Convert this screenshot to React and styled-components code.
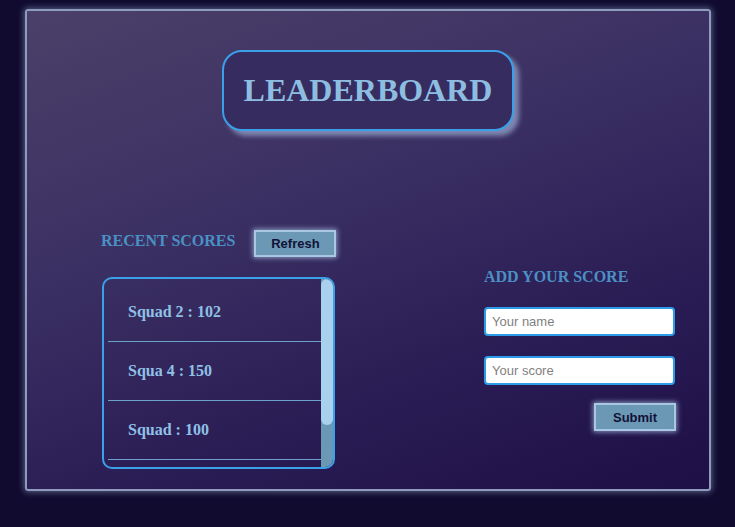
import React from 'react';
import styled, {createGlobalStyle} from 'styled-components';

//-------------------------------STYLED COMPONENTS-------------------------------//

const GlobalStyle = createGlobalStyle`
  html, body {
    margin: 0;
    padding: 0;
    background: #110b30;
    height: 100%;
  }
  #root {
    min-height: 100%;
  }
`

const Page = styled.div`
  width: 735px;
  height: 527px;
  padding: 9px 0 0 25px;
  box-sizing: border-box;
  background: #110b30;
`

const Board = styled.div`
  width: 686px;
  height: 482px;
  box-sizing: border-box;
  border: 2px solid #8d9cbc;
  border-radius: 3px;
  box-shadow: 0 0 6px 1px rgba(140, 156, 196, 0.6);
  background: linear-gradient(160deg, #4b4069 0%, #3a2f62 40%, #2a1d55 70%, #1e0f46 100%);
  padding-top: 39px;
  display: flex;
  flex-direction: column;
`

const TitleBox = styled.div`
  align-self: center;
  width: 292px;
  height: 81px;
  box-sizing: border-box;
  border: 2px solid #3aa0e8;
  border-radius: 20px;
  background: #362c5f;
  box-shadow: 5px 5px 5px rgba(150, 165, 205, 0.75);
  display: flex;
  align-items: center;
  justify-content: center;
`

const Title = styled.h1`
  margin: 0;
  font-family: "Liberation Serif", serif;
  font-weight: bold;
  font-size: 32px;
  color: #8dbde0;
`

const Columns = styled.div`
  display: flex;
  margin-top: 99px;
  padding-left: 74px;
`

const LeftColumn = styled.div`
  display: flex;
  flex-direction: column;
  width: 235px;
  flex-shrink: 0;
`

const HeadRow = styled.div`
  display: flex;
  align-items: center;
  gap: 19px;
`

const Heading = styled.h2`
  margin: 0;
  white-space: nowrap;
  flex-shrink: 0;
  font-family: "Liberation Serif", serif;
  font-weight: bold;
  font-size: 16px;
  line-height: 18px;
  color: #4a90c4;
  ${props => props.offset && 'margin-top: -5px;'}
`

const GlowButton = styled.button`
  width: 82px;
  height: ${props => props.tall ? '28px' : '27px'};
  flex-shrink: 0;
  box-sizing: border-box;
  border: 2px solid #a9c6e2;
  background: #6a98b5;
  box-shadow: 0 0 5px 1px rgba(170, 195, 230, 0.75);
  font-family: "Liberation Sans", Arial, sans-serif;
  font-weight: bold;
  font-size: 13px;
  color: #121236;
  padding: 0;
  cursor: pointer;
`

const ListFrame = styled.div`
  margin: 20px 0 0 1px;
  width: 233px;
  height: 192px;
  box-sizing: border-box;
  border: 2px solid #3aa0e8;
  border-radius: 10px;
  overflow: hidden;
  display: flex;
`

const ScoreList = styled.ul`
  list-style: none;
  margin: 0;
  flex: 1;
  padding: 4px 0 0 4px;
  overflow: hidden;
`

const ScoreItem = styled.li`
  height: 59px;
  box-sizing: border-box;
  border-bottom: 1px solid #6ba2cc;
  padding-left: 20px;
  display: flex;
  align-items: center;
  font-family: "Liberation Serif", serif;
  font-weight: bold;
  font-size: 16px;
  color: #90c0e6;
`

const ScrollTrack = styled.div`
  width: 12px;
  flex-shrink: 0;
  background: #6a98b5;
`

const ScrollThumb = styled.div`
  width: 12px;
  height: 146px;
  border-radius: 6px;
  background: #a9d1ee;
`

const RightColumn = styled.form`
  display: flex;
  flex-direction: column;
  margin-left: 148px;
  margin-top: 38px;
  width: 192px;
`

const InputField = styled.input`
  width: 191px;
  height: 29px;
  box-sizing: border-box;
  border: 2px solid #2c9be8;
  border-radius: 4px;
  background: #fff;
  margin-top: ${props => props.first ? '21px' : '20px'};
  padding: 0 6px;
  font-family: "Liberation Sans", Arial, sans-serif;
  font-size: 13px;
  color: #333;
  outline: none;

  &::placeholder {
    color: #7f7f7f;
  }
`

const SubmitRow = styled.div`
  display: flex;
  justify-content: flex-end;
  margin-top: 18px;
`

const scores = [
  {id: 1, name: 'Squad 2', score: 102},
  {id: 2, name: 'Squa 4', score: 150},
  {id: 3, name: 'Squad', score: 100}
];

export default function App () {
  return (
    <Page>
      <GlobalStyle/>
      <Board>
        <TitleBox>
          <Title>LEADERBOARD</Title>
        </TitleBox>
        <Columns>
          <LeftColumn>
            <HeadRow>
              <Heading offset>RECENT SCORES</Heading>
              <GlowButton type="button">Refresh</GlowButton>
            </HeadRow>
            <ListFrame>
              <ScoreList>
                {scores.map((s) => (
                  <ScoreItem key={s.id}>{s.name} : {s.score}</ScoreItem>
                ))}
              </ScoreList>
              <ScrollTrack>
                <ScrollThumb/>
              </ScrollTrack>
            </ListFrame>
          </LeftColumn>
          <RightColumn onSubmit={e => e.preventDefault()}>
            <Heading>ADD YOUR SCORE</Heading>
            <InputField first type="text" placeholder="Your name"/>
            <InputField type="text" placeholder="Your score"/>
            <SubmitRow>
              <GlowButton tall type="submit">Submit</GlowButton>
            </SubmitRow>
          </RightColumn>
        </Columns>
      </Board>
    </Page>
  )
}
